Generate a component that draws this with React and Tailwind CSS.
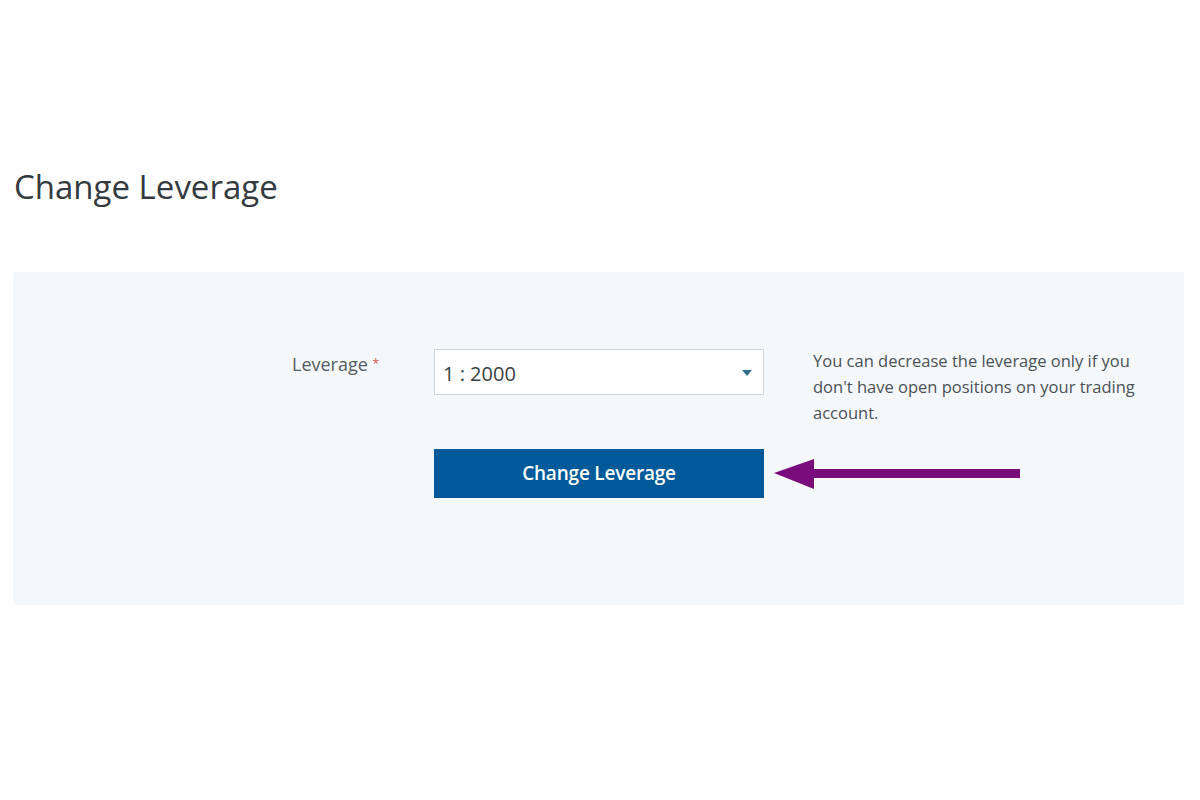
import { useState } from 'react';

const LEVERAGE_OPTIONS = ['1 : 2000', '1 : 1000', '1 : 500', '1 : 200', '1 : 100', '1 : 50'];

export default function App() {
  const [leverage, setLeverage] = useState(LEVERAGE_OPTIONS[0]);

  return (
    <div className="min-h-screen bg-white pl-[13px] pr-[16px] font-['Open_Sans',sans-serif]">
      <h1 className="pt-[165px] pl-px text-[33px] leading-[44px] font-normal text-[#333a40]">Change Leverage</h1>

      <div className="relative mt-[63px] h-[333px] rounded-[3px] bg-[#f4f8fa]">
        <div className="flex pt-[77px] pl-[279px]">
          <label className="w-[142px] pt-[3px] text-[18px] leading-[24px] text-[#555c62]">
            Leverage <span className="align-top text-[12px] text-[#d9534f]">*</span>
          </label>

          <div className="w-[330px]">
            <div className="relative h-[46px] border border-[#cfd4d8] bg-white">
              <select
                value={leverage}
                onChange={(e) => setLeverage(e.target.value)}
                className="h-full w-full appearance-none bg-transparent pl-[8px] pt-[4px] text-[20px] text-[#3a3f44] outline-none"
              >
                {LEVERAGE_OPTIONS.map((o) => (
                  <option key={o}>{o}</option>
                ))}
              </select>
              <span className="pointer-events-none absolute right-[11px] top-[20px] h-0 w-0 border-x-[5px] border-t-[6px] border-x-transparent border-t-[#2e6f8e]" />
            </div>

            <button
              type="button"
              className="mt-[54px] h-[49px] w-full bg-[#005a9a] text-[19px] font-semibold tracking-[-0.2px] text-white"
            >
              Change Leverage
            </button>
          </div>

          <p className="ml-[49px] -mt-px w-[345px] text-[16.5px] leading-[26px] text-[#4a5157]">
            You can decrease the leverage only if you don't have open positions on your trading account.
          </p>
        </div>

        {/* pointer arrow */}
        <svg className="absolute left-[760px] top-[187px]" width="250" height="32" viewBox="0 0 250 32">
          <polygon points="1,14 41,0 41,10 247,10 247,19 41,19 41,30" fill="#7a0b7c" />
        </svg>
      </div>
    </div>
  );
}
